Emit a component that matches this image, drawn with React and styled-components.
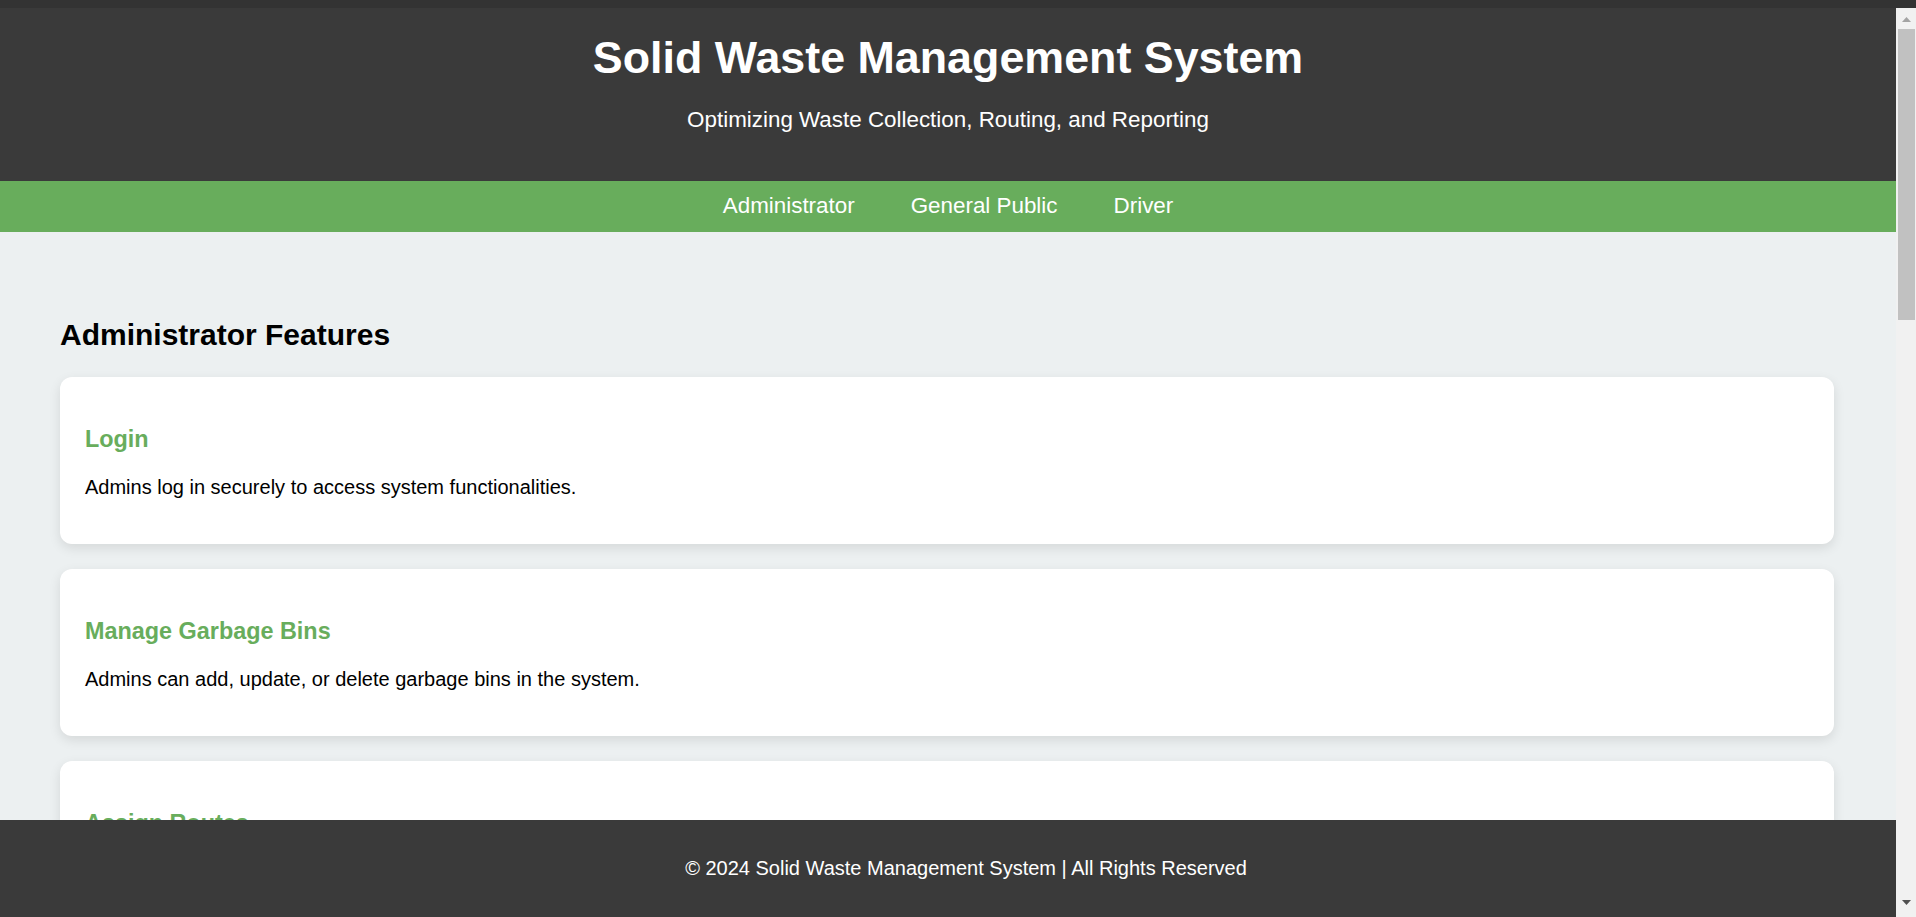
import React from "react";
import styled, { createGlobalStyle } from "styled-components";

const GlobalStyle = createGlobalStyle`
  html, body {
    margin: 0;
    height: 100%;
    overflow: hidden;
  }

  body {
    font-family: "Liberation Sans", Arial, sans-serif;
    color: #000;
  }
`;

const Frame = styled.div`
  height: 100vh;
  display: flex;
  flex-direction: column;
`;

const TopStrip = styled.div`
  height: 8px;
  flex-shrink: 0;
  background: #333333;
`;

const Viewport = styled.div`
  flex: 1;
  min-height: 0;
  display: flex;
`;

const Scroller = styled.div`
  flex: 1;
  min-width: 0;
  overflow-y: scroll;
  overflow-x: hidden;
  background: #ecf0f1;
  scrollbar-width: none;
`;

/* stand-in for the browser's scrollbar seen in the screenshot */
const Rail = styled.div`
  width: 20px;
  flex-shrink: 0;
  background: #f1f1f1;
  display: flex;
  flex-direction: column;
`;

const RailButton = styled.div`
  height: 20px;
  flex-shrink: 0;
  display: flex;
  align-items: ${({ $down }) => ($down ? "flex-start" : "flex-end")};
  justify-content: center;
  padding: ${({ $down }) => ($down ? "3px 0 0" : "0 0 6px")};
  box-sizing: border-box;
  margin-top: ${({ $down }) => ($down ? "auto" : "0")};
`;

const Thumb = styled.div`
  height: 291px;
  margin: 1px 1px 0 2px;
  background: #c1c1c1;
`;

const Header = styled.header`
  background: #3a3a3a;
  color: #fff;
  text-align: center;
  padding: 24px 0 48px;
`;

const Title = styled.h1`
  margin: 0 0 24px;
  font-size: 44.8px;
  font-weight: 700;
`;

const Tagline = styled.p`
  margin: 0;
  font-size: 22.4px;
`;

const Nav = styled.nav`
  background: #68ad5c;
  display: flex;
  justify-content: center;
  gap: 56px;
  padding: 12px 0 13px;
`;

const NavLink = styled.a`
  color: #fff;
  font-size: 22.4px;
  text-decoration: none;
  cursor: pointer;
`;

const Main = styled.main`
  padding: 86px 62px 40px 60px;
`;

const Section = styled.section`
  margin-bottom: 60px;
`;

const SectionTitle = styled.h2`
  margin: 0 0 25px;
  font-size: 30px;
  font-weight: 700;
`;

const Card = styled.div`
  background: #fff;
  border-radius: 12px;
  padding: 25px;
  margin-bottom: 25px;
  box-shadow: 0 4px 12px rgba(0, 0, 0, 0.1);
`;

const CardTitle = styled.h3`
  margin: 24px 0 23px;
  font-size: 23.4px;
  font-weight: 700;
  color: #68ad5c;
`;

const CardText = styled.p`
  margin: 0 0 20px;
  font-size: 20px;
`;

const Footer = styled.footer`
  position: sticky;
  bottom: 0;
  background: #3a3a3a;
  color: #fff;
  text-align: center;
  font-size: 20px;
  padding: 37px 0 37px 36px;
`;

const sections = [
  {
    title: "Administrator Features",
    items: [
      ["Login", "Admins log in securely to access system functionalities."],
      ["Manage Garbage Bins", "Admins can add, update, or delete garbage bins in the system."],
      ["Assign Routes", "Admins assign optimized collection routes to drivers."],
      ["Generate Reports", "Admins generate reports on waste collection and bin status."],
    ],
  },
  {
    title: "General Public Features",
    items: [
      ["Report Overflowing Bins", "Citizens can report full or damaged garbage bins."],
      ["View Collection Schedule", "Citizens can view the waste collection schedule for their area."],
    ],
  },
  {
    title: "Driver Features",
    items: [
      ["Login", "Drivers log in to view their assigned tasks."],
      ["View Assigned Routes", "Drivers view the optimized routes assigned to them."],
      ["Update Collection Status", "Drivers mark bins as collected after each pickup."],
    ],
  },
];

function Arrow({ down }) {
  return (
    <svg width="9" height="5" viewBox="0 0 9 5">
      {down ? (
        <polygon points="0,0 9,0 4.5,5" fill="#505050" />
      ) : (
        <polygon points="4.5,0 9,5 0,5" fill="#a3a3a3" />
      )}
    </svg>
  );
}

export default function App() {
  return (
    <>
      <GlobalStyle />
      <Frame>
        <TopStrip />
        <Viewport>
          <Scroller>
            <Header>
              <Title>Solid Waste Management System</Title>
              <Tagline>Optimizing Waste Collection, Routing, and Reporting</Tagline>
            </Header>

            <Nav>
              <NavLink>Administrator</NavLink>
              <NavLink>General Public</NavLink>
              <NavLink>Driver</NavLink>
            </Nav>

            <Main>
              {sections.map((section) => (
                <Section key={section.title}>
                  <SectionTitle>{section.title}</SectionTitle>
                  {section.items.map(([name, text]) => (
                    <Card key={name + text}>
                      <CardTitle>{name}</CardTitle>
                      <CardText>{text}</CardText>
                    </Card>
                  ))}
                </Section>
              ))}
            </Main>

            <Footer>© 2024 Solid Waste Management System | All Rights Reserved</Footer>
          </Scroller>

          <Rail>
            <RailButton>
              <Arrow />
            </RailButton>
            <Thumb />
            <RailButton $down>
              <Arrow down />
            </RailButton>
          </Rail>
        </Viewport>
      </Frame>
    </>
  );
}
